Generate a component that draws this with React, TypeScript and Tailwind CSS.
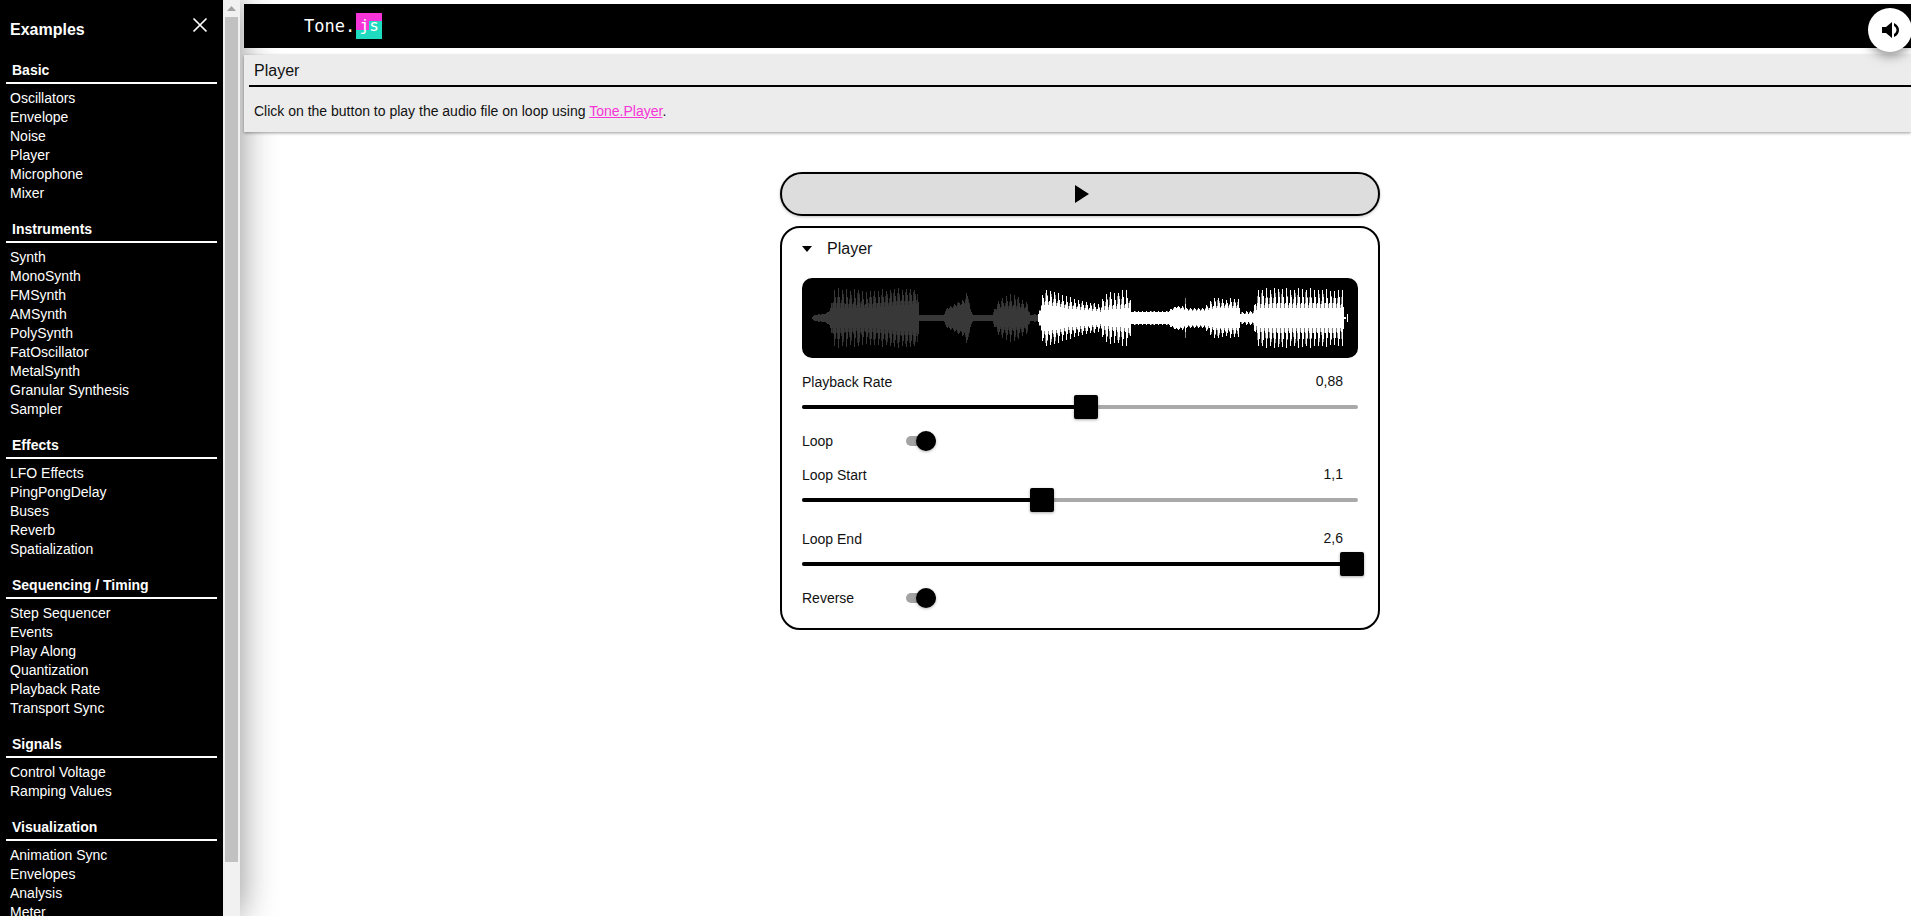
import React from "react";

const sections: [string, string[]][] = [
  ["Basic", ["Oscillators", "Envelope", "Noise", "Player", "Microphone", "Mixer"]],
  ["Instruments", ["Synth", "MonoSynth", "FMSynth", "AMSynth", "PolySynth", "FatOscillator", "MetalSynth", "Granular Synthesis", "Sampler"]],
  ["Effects", ["LFO Effects", "PingPongDelay", "Buses", "Reverb", "Spatialization"]],
  ["Sequencing / Timing", ["Step Sequencer", "Events", "Play Along", "Quantization", "Playback Rate", "Transport Sync"]],
  ["Signals", ["Control Voltage", "Ramping Values"]],
  ["Visualization", ["Animation Sync", "Envelopes", "Analysis", "Meter"]],
];

// x, solid half-height, spike half-height
const env: [number, number, number][] = [
  [10, 1, 2], [12, 2.5, 3.5], [24, 4, 5], [28, 7, 10], [30, 9, 30], [70, 9, 29], [95, 12, 30], [115, 13, 30],
  [117, 2.5, 3.5], [141, 2.5, 3.5], [145, 8, 11], [160, 13, 18], [166, 15, 30], [168, 6, 9], [171, 2.5, 3.5],
  [190, 2.5, 3.5], [195, 8, 18], [210, 9, 25], [225, 7, 16], [228, 2.5, 3.5], [236, 3, 4],
  [240, 11, 24], [243, 13, 30], [265, 9, 22], [298, 6, 14], [301, 7, 25], [327, 9, 30], [329, 5.5, 7],
  [365, 5.5, 7], [375, 10, 13], [382, 8, 11], [383, 8, 30], [384, 7, 10], [401, 7, 10], [411, 9, 20], [436, 10, 20],
  [438, 3.5, 6], [451, 3.5, 8], [455, 9, 30], [540, 9, 30], [542, 1, 2], [544, 0, 0], [545, 2, 6], [546, 0, 0],
];

function lerp(x: number): [number, number] {
  if (x < env[0][0] || x > env[env.length - 1][0]) return [0, 0];
  for (let i = 0; i < env.length - 1; i++) {
    const a = env[i];
    const b = env[i + 1];
    if (x >= a[0] && x <= b[0]) {
      const t = (x - a[0]) / (b[0] - a[0] || 1);
      return [a[1] + (b[1] - a[1]) * t, a[2] + (b[2] - a[2]) * t];
    }
  }
  return [0, 0];
}

function rnd(i: number) {
  const s = Math.sin(i * 12.9898) * 43758.5453;
  return s - Math.floor(s);
}

const split = 236;
const pattern = [1, 0.6, 0.05, 0.3];
function buildPaths() {
  let darkOuter = "";
  let darkInner = "";
  let lightOuter = "";
  let lightInner = "";
  for (let x = 0; x < 556; x++) {
    const [solid, spike] = lerp(x);
    if (spike === 0) continue;
    const r = pattern[x % 4] * (0.85 + rnd(x) * 0.15);
    const g = 0.2 + rnd(x + 1000) * 0.6 * (x % 4 === 2 ? 0.15 : 1);
    const white = solid + (spike - solid) * r;
    const grey = solid + (spike - solid) * Math.max(r, g);
    const px = x + 0.5;
    const outer = `M${px} ${40 - grey}V${40 + grey}`;
    const inner = `M${px} ${40 - white}V${40 + white}`;
    if (x < split) {
      darkOuter += outer;
      darkInner += inner;
    } else {
      lightOuter += outer;
      lightInner += inner;
    }
  }
  return { darkOuter, darkInner, lightOuter, lightInner };
}

function Waveform() {
  const p = buildPaths();
  return (
    <div className="mt-[9px] h-[80px] rounded-[10px] bg-black overflow-hidden">
      <svg width="556" height="80" viewBox="0 0 556 80" className="block">
        <path d={p.darkOuter} stroke="#2a2a2a" strokeWidth="1" fill="none" shapeRendering="crispEdges" />
        <path d={p.darkInner} stroke="#383838" strokeWidth="1" fill="none" shapeRendering="crispEdges" />
        <path d={p.lightOuter} stroke="#808080" strokeWidth="1" fill="none" shapeRendering="crispEdges" />
        <path d={p.lightInner} stroke="#ffffff" strokeWidth="1" fill="none" shapeRendering="crispEdges" />
      </svg>
    </div>
  );
}

function Slider({ label, value, pct, mt }: { label: string; value: string; pct: number; mt: string }) {
  return (
    <div className={mt}>
      <div className="flex h-[20px] items-center justify-between pr-[15px] text-[14px] text-[#111]">
        <span>{label}</span>
        <span className="-mt-[2px]">{value}</span>
      </div>
      <div className="relative flex h-[30px] items-center">
        <div className="flex h-[4px] w-full overflow-hidden rounded-full bg-[#a9a9a9]">
          <div className="h-full bg-black" style={{ width: `${pct}%` }} />
        </div>
        <div
          className="absolute top-[3px] h-[24px] w-[24px] -translate-x-1/2 rounded-[2px] bg-black shadow-[0_1px_3px_rgba(0,0,0,0.35)]"
          style={{ left: `${pct}%` }}
        />
      </div>
    </div>
  );
}

function Toggle({ label, mt }: { label: string; mt: string }) {
  return (
    <div className={`flex h-[24px] items-center text-[14px] text-[#111] ${mt}`}>
      <span className="w-[104px]">{label}</span>
      <div className="relative h-[10px] w-[30px] rounded-full bg-[#a3a3a3]">
        <div className="absolute -top-[5px] right-0 h-[20px] w-[20px] rounded-full bg-black shadow-[0_1px_3px_rgba(0,0,0,0.3)]" />
      </div>
    </div>
  );
}

export default function App() {
  return (
    <div className="relative flex h-[916px] w-full overflow-hidden bg-white font-['Liberation_Sans',Arial,sans-serif] text-black">
      {/* Sidebar */}
      <div className="relative z-0 flex h-full w-[240px] shrink-0 shadow-[0_0_34px_rgba(0,0,0,0.45)]">
        <aside className="h-full w-[223px] overflow-hidden bg-black text-white">
          <div className="flex h-[61px] items-start justify-between pl-[10px] pr-[15px]">
            <span className="mt-[20px] text-[16px] font-bold leading-[20px]">Examples</span>
            <svg width="16" height="16" viewBox="0 0 16 16" className="mt-[17px]">
              <path d="M1.5 1.5L14.5 14.5M14.5 1.5L1.5 14.5" stroke="white" strokeWidth="1.7" fill="none" />
            </svg>
          </div>
          {sections.map(([title, items]) => (
            <section key={title} className="mb-[17px]">
              <h2 className="pl-[12px] text-[14px] font-bold leading-[19px]">{title}</h2>
              <div className="ml-[6px] mt-[2px] h-[2px] w-[211px] bg-white" />
              <ul className="mt-[5px] pl-[10px] text-[14px] leading-[19px]">
                {items.map((i) => (
                  <li key={i}>{i}</li>
                ))}
              </ul>
            </section>
          ))}
        </aside>
        <div className="flex h-full w-[17px] flex-col bg-[#f1f1f1]">
          <div className="flex h-[17px] items-center justify-center">
            <svg width="9" height="5" viewBox="0 0 9 5">
              <path d="M4.5 0L9 5H0Z" fill="#a3a3a3" />
            </svg>
          </div>
          <div className="mx-[2px] h-[845px] bg-[#c1c1c1]" />
        </div>
      </div>

      {/* Main */}
      <main className="relative z-10 min-w-0 flex-1">
        <header className="ml-[4px] mt-[4px] flex h-[44px] items-center bg-black pl-[60px] text-white">
          <span className="font-['DejaVu_Sans_Mono',monospace] text-[17px] font-medium leading-none">Tone.</span>
          <span className="relative ml-[1px] h-[26px] w-[26px] overflow-hidden bg-[#1fdcc0] text-center font-['DejaVu_Sans_Mono',monospace] text-[16px] font-medium leading-[26px]">
            <span className="absolute left-0 top-0 h-[8px] w-full bg-[#f734d7]" />
            <span className="absolute left-0 top-0 h-[17px] w-[13px] bg-[#f734d7]" />
            <span className="relative">js</span>
          </span>
        </header>

        <div className="ml-[4px] mt-[7px] h-[77px] bg-[#ececec] pl-[5px] shadow-[0_1px_3px_rgba(0,0,0,0.4)]">
          <div className="flex h-[30px] items-center pl-[5px] pt-[1px] text-[16px] text-[#111]">Player</div>
          <div className="h-[2px] bg-black" />
          <p className="pl-[5px] pt-[15px] text-[14px] leading-[18px] text-[#111]">
            Click on the button to play the audio file on loop using{" "}
            <a href="#" className="text-[#f734d7] underline">
              Tone.Player
            </a>
            .
          </p>
        </div>

        <div className="flex flex-col items-center pl-[9px] pt-[40px]">
          <button className="flex h-[44px] w-[600px] items-center justify-center rounded-[22px] border-2 border-black bg-[#dddddd] shadow-[0_1px_3px_rgba(0,0,0,0.25)]">
            <svg width="14" height="18" viewBox="0 0 14 18" className="ml-[4px] -mt-[1px]">
              <path d="M0 0L14 9L0 18Z" fill="black" />
            </svg>
          </button>

          <section className="mt-[10px] h-[404px] w-[600px] rounded-[20px] border-2 border-black px-[20px]">
            <div className="flex h-[41px] items-center">
              <svg width="10" height="6" viewBox="0 0 10 6">
                <path d="M0 0H10L5 6Z" fill="black" />
              </svg>
              <span className="ml-[15px] text-[16px] text-[#111]">Player</span>
            </div>
            <Waveform />
            <Slider label="Playback Rate" value="0,88" pct={51.1} mt="mt-[14px]" />
            <Toggle label="Loop" mt="mt-[7px]" />
            <Slider label="Loop Start" value="1,1" pct={43.2} mt="mt-[12px]" />
            <Slider label="Loop End" value="2,6" pct={99} mt="mt-[14px]" />
            <Toggle label="Reverse" mt="mt-[7px]" />
          </section>
        </div>
      </main>

      {/* Volume button */}
      <button className="absolute left-[1868px] top-[8px] z-20 flex h-[44px] w-[44px] items-center justify-center rounded-full bg-white shadow-[0_3px_12px_rgba(0,0,0,0.5)]">
        <svg width="17" height="16" viewBox="0 0 17 16">
          <path d="M0 5H4L10 0V16L4 11H0ZM12 1C15.6 2.5 17 5.5 17 8C17 10.5 15.6 13.5 12 15V12C13.6 11 14.5 9.5 14.5 8C14.5 6.5 13.6 5 12 4Z" fill="black" />
        </svg>
      </button>
    </div>
  );
}
